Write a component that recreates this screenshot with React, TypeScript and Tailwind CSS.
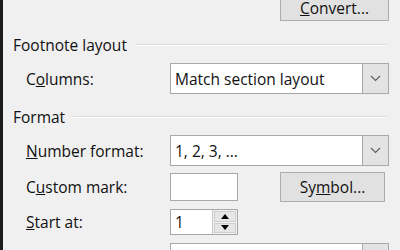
import type { ReactNode } from 'react'

const font = { fontFamily: '"Open Sans", "Noto Sans", sans-serif' }

function Chevron() {
  return (
    <svg width="11" height="7" viewBox="0 0 11 7" className="text-[#606060]">
      <path d="M1 1l4.5 4.5L10 1" fill="none" stroke="currentColor" strokeWidth="1.2" />
    </svg>
  )
}

function Heading({ children }: { children: ReactNode }) {
  return (
    <div className="flex h-[20px] items-center pl-[10px] pr-[13px]">
      <span>{children}</span>
      <div className="ml-[8px] h-[2px] flex-1 border-t border-b border-t-[#dcdcdc] border-b-white" />
    </div>
  )
}

function Select({ value }: { value: string }) {
  return (
    <div className="flex h-[31px] w-[219px] border border-[#a8a8a8] bg-white">
      <div className="flex flex-1 items-center pl-[4px]">{value}</div>
      <div className="flex w-[26px] items-center justify-center border-l border-[#a8a8a8] bg-[#e3e3e3]">
        <Chevron />
      </div>
    </div>
  )
}

function Row({ label, children, className }: { label: ReactNode; children: ReactNode; className?: string }) {
  return (
    <div className={`flex items-center ${className ?? ''}`}>
      <div className="w-[167px] pl-[23px]">{label}</div>
      {children}
    </div>
  )
}

export default function App() {
  return (
    <div
      className="h-[250px] w-[400px] overflow-hidden border-l-[3px] border-[#1c1c1c] bg-[#f0f0f0] text-[15.5px] leading-[20px] text-[#111]"
      style={font}
    >
      {/* top of the Convert button is scrolled off the dialog */}
      <div className="flex justify-end pr-[11px]">
        <button className="flex h-[21px] w-[109px] items-start justify-center border border-t-0 border-[#adadad] bg-[#e1e1e1] leading-[16px]">
          <span>
            <u>C</u>onvert...
          </span>
        </button>
      </div>

      <div className="mt-[14px]">
        <Heading>Footnote layout</Heading>
      </div>

      <Row label={<span>C<u>o</u>lumns:</span>} className="mt-[8px]">
        <Select value="Match section layout" />
      </Row>

      <div className="mt-[13px]">
        <Heading>Format</Heading>
      </div>

      <Row label={<span><u>N</u>umber format:</span>} className="mt-[8px]">
        <Select value="1, 2, 3, ..." />
      </Row>

      <Row label={<span>C<u>u</u>stom mark:</span>} className="mt-[6px]">
        <div className="h-[28px] w-[68px] border border-[#a8a8a8] bg-white" />
        <button className="ml-[42px] flex h-[30px] w-[105px] items-center justify-center border border-[#adadad] bg-[#e1e1e1]">
          <span>
            Sy<u>m</u>bol...
          </span>
        </button>
      </Row>

      <Row label={<span><u>S</u>tart at:</span>} className="mt-[7px]">
        <div className="flex h-[26px] w-[68px] border border-[#a8a8a8] bg-white">
          <div className="flex flex-1 items-center pl-[4px]">1</div>
          <div className="flex w-[25px] flex-col gap-[1px] border-l border-[#c8c8c8] bg-[#f0f0f0] p-[1px]">
            <div className="flex flex-1 items-center justify-center border border-[#cfcfcf] bg-[#e6e6e6]">
              <svg width="8" height="5" viewBox="0 0 8 5"><path d="M4 0L8 5H0z" fill="#000" /></svg>
            </div>
            <div className="flex flex-1 items-center justify-center border border-[#cfcfcf] bg-[#e6e6e6]">
              <svg width="8" height="5" viewBox="0 0 8 5"><path d="M0 0h8L4 5z" fill="#000" /></svg>
            </div>
          </div>
        </div>
      </Row>

      <Row label={<span>Nu<u>m</u>bering:</span>} className="mt-[8px]">
        <Select value="Continuous" />
      </Row>
    </div>
  )
}
